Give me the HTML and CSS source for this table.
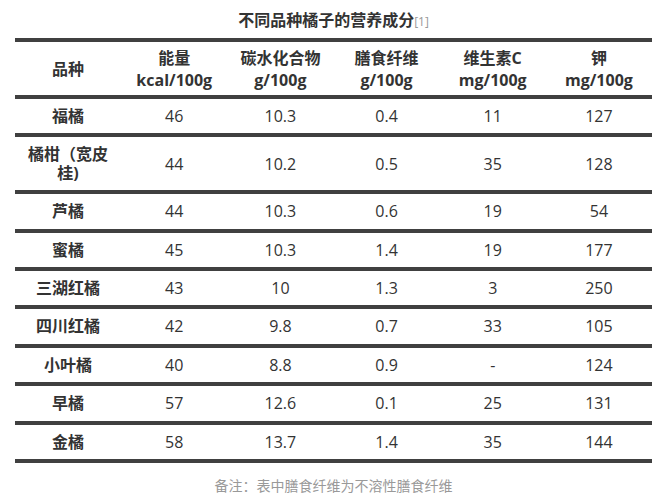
FILE: index.html
```html
<!DOCTYPE html>
<html lang="zh">
<head>
<meta charset="utf-8">
<link rel="stylesheet" href="styles.css">
</head>
<body>
<div class="wrap">
  <div class="caption">不同品种橘子的营养成分<span class="ref">[1]</span></div>
  <table class="nutri">
    <thead>
      <tr>
        <th>品种</th>
        <th>能量<br>kcal/100g</th>
        <th>碳水化合物<br>g/100g</th>
        <th>膳食纤维<br>g/100g</th>
        <th>维生素C<br>mg/100g</th>
        <th>钾<br>mg/100g</th>
      </tr>
    </thead>
    <tbody>
      <tr><th>福橘</th><td>46</td><td>10.3</td><td>0.4</td><td>11</td><td>127</td></tr>
      <tr><th>橘柑（宽皮桂)</th><td>44</td><td>10.2</td><td>0.5</td><td>35</td><td>128</td></tr>
      <tr><th>芦橘</th><td>44</td><td>10.3</td><td>0.6</td><td>19</td><td>54</td></tr>
      <tr><th>蜜橘</th><td>45</td><td>10.3</td><td>1.4</td><td>19</td><td>177</td></tr>
      <tr><th>三湖红橘</th><td>43</td><td>10</td><td>1.3</td><td>3</td><td>250</td></tr>
      <tr><th>四川红橘</th><td>42</td><td>9.8</td><td>0.7</td><td>33</td><td>105</td></tr>
      <tr><th>小叶橘</th><td>40</td><td>8.8</td><td>0.9</td><td>-</td><td>124</td></tr>
      <tr><th>早橘</th><td>57</td><td>12.6</td><td>0.1</td><td>25</td><td>131</td></tr>
      <tr><th>金橘</th><td>58</td><td>13.7</td><td>1.4</td><td>35</td><td>144</td></tr>
    </tbody>
  </table>
  <div class="note">备注：表中膳食纤维为不溶性膳食纤维</div>
</div>
</body>
</html>
```

FILE: styles.css
```css
html, body {
  margin: 0;
  padding: 0;
  background: #fff;
}
body {
  font-family: "Open Sans", "Noto Sans CJK SC", sans-serif;
  color: #333;
}
.wrap {
  padding: 0 15px;
}
.caption {
  text-align: center;
  font-size: 16px;
  font-weight: bold;
  line-height: 21px;
  padding: 10px 0 6px;
  color: #333;
}
.ref {
  font-size: 12px;
  font-weight: normal;
  color: #999;
}
.nutri {
  width: 100%;
  border-collapse: collapse;
  table-layout: fixed;
  font-size: 16px;
}
.nutri th, .nutri td {
  border-top: 4px solid #404040;
  border-bottom: 4px solid #404040;
  padding: 8px 8px;
  line-height: 18.4px;
  text-align: center;
  vertical-align: middle;
  color: #333;
}
.nutri thead th {
  line-height: 22px;
  padding: 4.5px 6px;
}
.nutri th {
  font-weight: bold;
}
.nutri td {
  font-weight: normal;
}
.note {
  text-align: center;
  font-size: 14px;
  line-height: 20px;
  padding-top: 13px;
  color: #999;
}
```
